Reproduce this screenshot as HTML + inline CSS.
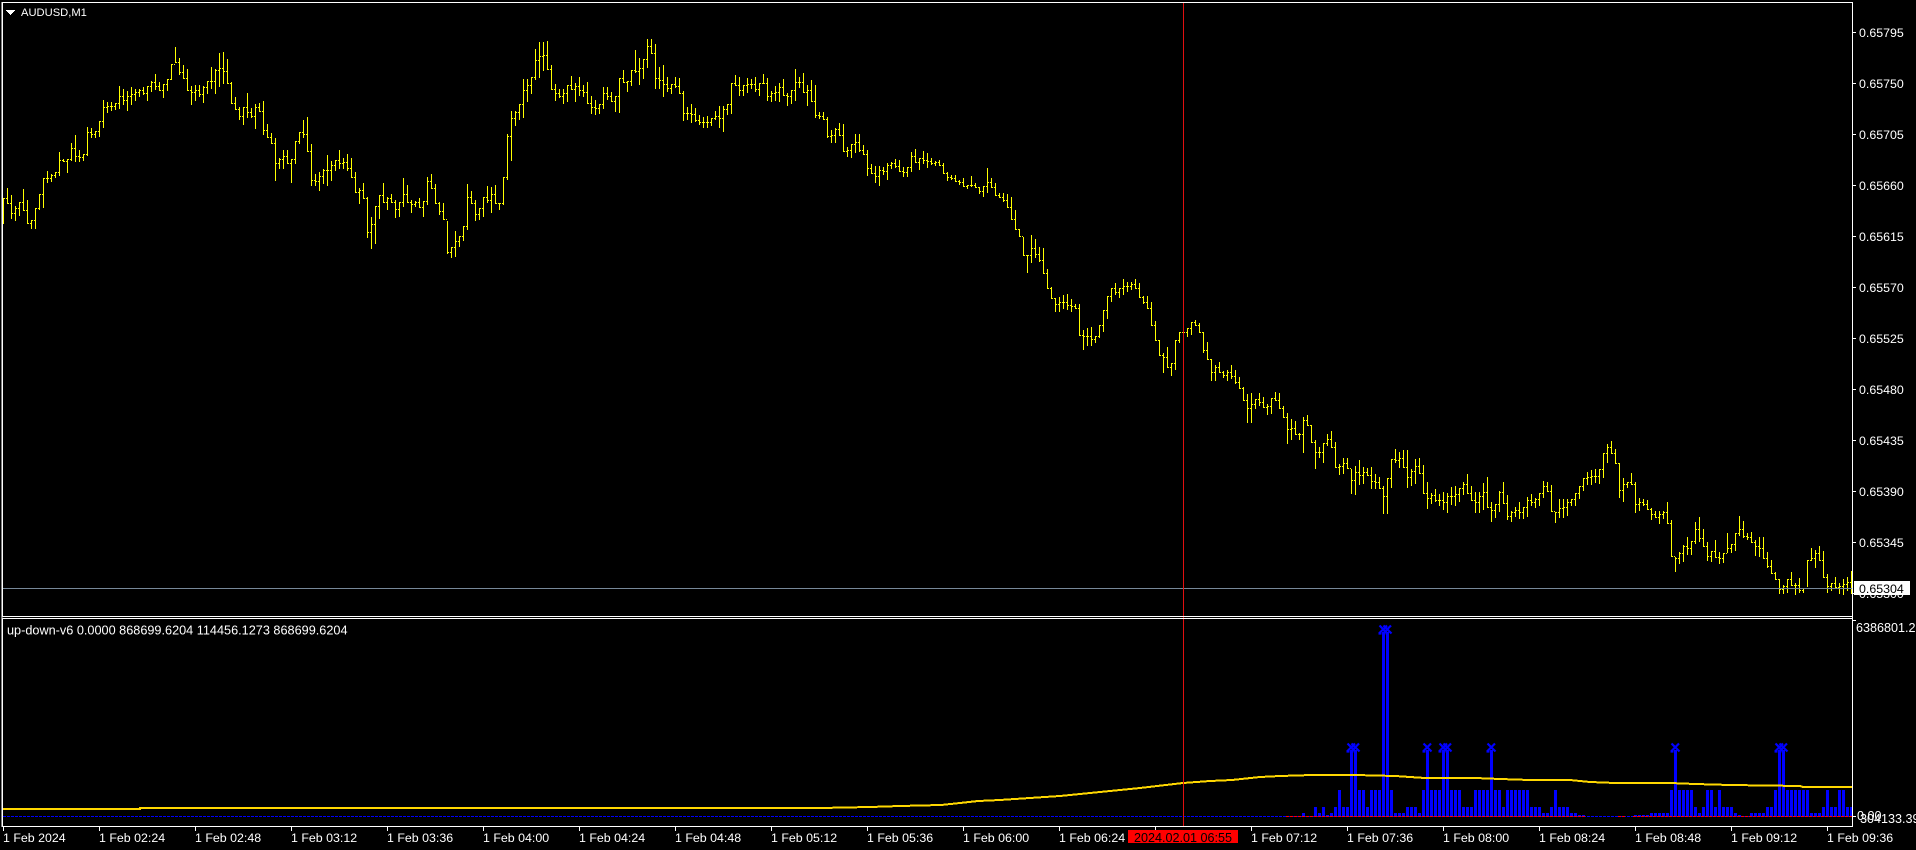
<!DOCTYPE html>
<html lang="en">
<head>
<meta charset="utf-8">
<title>AUDUSD,M1</title>
<style>
html,body{margin:0;padding:0;background:#000;width:1916px;height:850px;overflow:hidden}
svg{display:block;position:absolute;left:0;top:0}
text{font-family:"Liberation Sans",Arial,sans-serif;fill:#fff;font-size:12.4px}
.t{font-size:11.2px}
</style>
</head>
<body>
<svg width="1916" height="850" viewBox="0 0 1916 850" xmlns="http://www.w3.org/2000/svg">
<defs><path id="xm" d="M-3.5-4L4.5 4M4-4L-4 4M-4.5 4h3"/></defs>
<rect width="1916" height="850" fill="#000"/>
<g shape-rendering="crispEdges">
<path fill="none" stroke="#0000ff" stroke-width="3" transform="translate(.5 0)" d="M1303 813V817M1315 807V817M1319 813V817M1323 807V817M1327 815V817M1331 813V817M1335 807V817M1339 790V817M1343 807V817M1347 807V817M1351 750V817M1355 750V817M1359 790V817M1363 790V817M1367 807V817M1371 790V817M1375 790V817M1379 790V817M1383 632V817M1387 632V817M1391 790V817M1395 813V817M1399 813V817M1403 813V817M1407 807V817M1411 807V817M1415 807V817M1419 813V817M1423 790V817M1427 750V817M1431 790V817M1435 790V817M1439 790V817M1443 750V817M1447 750V817M1451 790V817M1455 790V817M1459 790V817M1463 807V817M1467 807V817M1471 807V817M1475 790V817M1479 790V817M1483 790V817M1487 790V817M1491 750V817M1495 790V817M1499 790V817M1503 807V817M1507 790V817M1511 790V817M1515 790V817M1519 790V817M1523 790V817M1527 790V817M1531 807V817M1535 807V817M1539 807V817M1543 813V817M1547 813V817M1551 807V817M1555 790V817M1559 807V817M1563 807V817M1567 807V817M1571 813V817M1575 813V817M1579 815V817M1583 815V817M1635 815V817M1639 815V817M1643 815V817M1647 815V817M1651 813V817M1655 813V817M1659 813V817M1663 813V817M1667 813V817M1671 790V817M1675 750V817M1679 790V817M1683 790V817M1687 790V817M1691 790V817M1695 807V817M1699 813V817M1703 807V817M1707 790V817M1711 790V817M1715 807V817M1719 790V817M1723 807V817M1727 807V817M1731 807V817M1735 813V817M1739 815V817M1751 813V817M1755 813V817M1759 813V817M1763 813V817M1767 807V817M1771 807V817M1775 790V817M1779 750V817M1783 750V817M1787 790V817M1791 790V817M1795 790V817M1799 790V817M1803 790V817M1807 790V817M1811 813V817M1815 813V817M1819 813V817M1823 807V817M1827 790V817M1831 807V817M1835 807V817M1839 790V817M1843 790V817M1847 807V817M1851 807V817"/>
<path d="M3 816.5H1852" stroke="#0000ff" stroke-width="1" stroke-dasharray="3 1" fill="none"/>
<path d="M1286 816.5H1585M1618 816.5H1625M1633 816.5H1852" stroke="#ff0000" stroke-width="1" stroke-dasharray="3 1" fill="none"/>
<polyline fill="none" stroke="#ffd700" stroke-width="2" points="3,809 140,809 140,808 820,808 870,807 900,806 941,805 960,803 978,801 1000,800 1030,798 1060,796 1100,792 1140,788 1183,783 1210,781 1232,780 1260,777 1280,776 1312,775 1355,775 1395,776 1425,778 1475,778 1500,779 1530,780 1570,780 1590,782 1615,783 1670,783 1695,784 1730,785 1800,786 1803,787 1852,787"/>
<path fill="none" stroke="#ffff00" stroke-width="1" transform="translate(.5 0)" d="M3 198V224M7 188V204M11 195V219M15 206V221M19 202V216M23 189V211M27 200V224M31 220V229M35 208V229M39 194V210
M43 178V208M47 171V183M51 174V182M55 172V178M59 152V176M63 159V162M67 159V173M71 143V161M75 135V162M79 150V162
M83 154V161M87 127V156M91 128V138M95 131V138M99 121V137M103 100V128M107 102V113M111 102V111M115 103V110M119 86V109
M123 89V105M127 91V111M131 87V105M135 89V101M139 89V97M143 87V95M147 86V101M151 81V92M155 74V90M159 82V91
M163 84V98M167 79V91M171 64V80M175 47V63M179 58V75M183 65V79M187 69V91M191 86V105M195 85V101M199 85V97
M203 86V103M207 81V94M211 67V89M215 69V94M219 53V87M223 52V84M227 59V84M231 82V104M235 97V110M239 107V120
M243 107V125M247 93V118M251 108V118M255 104V129M259 103V112M263 101V135M267 124V138M271 133V144M275 138V181M279 158V169
M283 150V169M287 150V164M291 159V183M295 141V164M299 132V144M303 120V138M307 117V152M311 144V186M315 174V186M319 172V191
M323 169V184M327 155V186M331 161V181M335 160V171M339 150V169M343 158V169M347 154V171M351 158V178M355 172V193M359 188V204
M363 183V199M367 197V238M371 217V249M375 206V244M379 195V219M383 183V203M387 197V210M391 194V203M395 200V218M399 202V217
M403 178V207M407 185V203M411 200V213M415 201V207M419 198V208M423 201V217M427 177V205M431 174V189M435 184V204M439 202V215
M443 203V220M447 221V254M451 247V258M455 231V257M459 236V247M463 226V241M467 184V230M471 191V204M475 200V221M479 208V220
M483 197V217M487 186V203M491 187V213M495 185V204M499 203V210M503 177V205M507 134V180M511 111V161M515 111V126M519 104V120
M523 79V118M527 79V102M531 77V94M535 49V80M539 42V78M543 42V71M547 41V70M551 65V90M555 84V101M559 89V98
M563 89V104M567 85V102M571 76V90M575 83V102M579 77V96M583 85V97M587 82V104M591 96V114M595 100V115M599 104V114
M603 87V109M607 87V100M611 92V102M615 96V112M619 78V113M623 70V83M627 81V92M631 70V86M635 50V73M639 58V85
M643 59V79M647 39V68M651 39V54M655 44V89M659 67V89M663 65V97M667 77V92M671 84V94M675 77V88M679 78V94
M683 91V121M687 107V120M691 104V123M695 108V122M699 115V125M703 117V128M707 116V128M711 118V126M715 111V120M719 106V128
M723 106V132M727 104V115M731 83V114M735 75V86M739 77V96M743 85V96M747 78V93M751 79V89M755 77V92M759 83V96
M763 74V84M767 78V101M771 91V102M775 86V101M779 83V102M783 79V96M787 93V106M791 90V104M795 69V101M799 77V88
M803 73V93M807 85V106M811 80V102M815 85V118M819 112V119M823 112V120M827 117V138M831 130V143M835 128V143M839 123V136
M843 124V152M847 147V157M851 144V158M855 134V153M859 134V152M863 145V155M867 150V176M871 164V174M875 166V183M879 166V186
M883 167V175M887 163V180M891 162V169M895 159V168M899 160V172M903 167V177M907 167V177M911 152V172M915 149V163M919 158V170
M923 151V164M927 153V168M931 158V165M935 161V166M939 160V166M943 163V174M947 172V181M951 175V180M955 175V182M959 180V185
M963 178V187M967 185V189M971 176V187M975 183V188M979 187V194M983 186V197M987 168V193M991 178V188M995 183V196M999 193V198
M1003 193V202M1007 194V208M1011 197V220M1015 210V230M1019 229V237M1023 237V256M1027 255V273M1031 235V263M1035 239V258M1039 247V262
M1043 248V274M1047 269V289M1051 287V299M1055 298V312M1059 297V312M1063 295V309M1067 294V310M1071 299V312M1075 304V309M1079 304V336
M1083 330V350M1087 328V346M1091 327V346M1095 336V343M1099 325V338M1103 310V332M1107 296V319M1111 288V302M1115 283V295M1119 288V298
M1123 279V295M1127 282V292M1131 282V290M1135 279V289M1139 283V298M1143 296V304M1147 296V309M1151 302V326M1155 321V341M1159 340V356
M1163 353V373M1167 347V368M1171 363V376M1175 340V370M1179 332V343M1183 324V338M1187 328V337M1191 322V335M1195 320V326M1199 323V333
M1203 332V353M1207 342V360M1211 359V381M1215 365V381M1219 362V373M1223 371V378M1227 370V381M1231 365V379M1235 370V384M1239 377V389
M1243 387V401M1247 394V423M1251 393V423M1255 399V409M1259 393V406M1263 397V408M1267 404V415M1271 398V414M1275 392V401M1279 393V409
M1283 406V418M1287 413V444M1291 419V440M1295 421V435M1299 433V440M1303 417V453M1307 415V426M1311 425V443M1315 440V469M1319 447V458
M1323 443V463M1327 434V446M1331 431V448M1335 442V468M1339 464V475M1343 458V474M1347 458V469M1351 469V494M1355 466V495M1359 460V485
M1363 467V484M1367 468V476M1371 467V489M1375 474V489M1379 477V489M1383 486V514M1387 478V514M1391 459V488M1395 449V463M1399 452V468
M1403 450V468M1407 450V488M1411 469V486M1415 459V484M1419 458V474M1423 465V494M1427 482V509M1431 493V504M1435 489V502M1439 494V506
M1443 492V510M1447 493V513M1451 487V505M1455 486V506M1459 488V502M1463 482V495M1467 474V494M1471 486V501M1475 492V513M1479 492V513
M1483 483V510M1487 477V508M1491 502V522M1495 504V518M1499 491V512M1503 482V504M1507 495V520M1511 511V522M1515 507V517M1519 502V519
M1523 507V519M1527 497V517M1531 494V506M1535 498V508M1539 493V506M1543 481V498M1547 482V492M1551 485V512M1555 512V523M1559 499V518
M1563 499V518M1567 499V516M1571 499V506M1575 493V506M1579 486V499M1583 478V491M1587 472V485M1591 470V485M1595 469V483M1599 469V484
M1603 453V478M1607 444V463M1611 441V454M1615 449V464M1619 463V498M1623 478V502M1627 482V488M1631 473V485M1635 482V513M1639 498V511
M1643 499V506M1647 500V510M1651 508V520M1655 511V518M1659 511V524M1663 511V519M1667 502V524M1671 520V557M1675 557V572M1679 552V564
M1683 545V562M1687 537V555M1691 541V555M1695 522V544M1699 517V542M1703 529V547M1707 542V561M1711 551V562M1715 540V558M1719 552V564
M1723 553V563M1727 533V553M1731 544V553M1735 533V551M1739 516V536M1743 521V538M1747 533V540M1751 532V543M1755 540V556M1759 537V557
M1763 537V559M1767 552V568M1771 560V574M1775 572V580M1779 579V594M1783 585V594M1787 579V593M1791 572V586M1795 583V595M1799 578V593
M1803 588V593M1807 560V587M1811 548V561M1815 550V568M1819 546V561M1823 551V578M1827 574V593M1831 583V591M1835 577V588M1839 583V594
M1843 579V595M1847 577V591M1851 571V594"/>
<path fill="none" stroke="#ffff00" stroke-width="1" stroke-dasharray="1 1" transform="translate(0 .5)" d="M4 198h3M8 203h3M12 213h3M16 208h3M20 202h3M24 210h3M28 223h3M32 220h3M36 208h3M40 194h3
M44 178h3M48 178h3M52 175h3M56 172h3M60 160h3M64 161h3M68 159h3M72 148h3M76 156h3M80 157h3
M84 154h3M88 132h3M92 134h3M96 131h3M100 121h3M104 107h3M108 106h3M112 106h3M116 103h3M120 96h3
M124 100h3M128 96h3M132 94h3M136 92h3M140 90h3M144 93h3M148 86h3M152 82h3M156 86h3M160 90h3
M164 84h3M168 79h3M172 64h3M176 62h3M180 72h3M184 78h3M188 90h3M192 92h3M196 90h3M200 94h3
M204 87h3M208 81h3M212 81h3M216 70h3M220 68h3M224 71h3M228 83h3M232 103h3M236 109h3M240 116h3
M244 107h3M248 112h3M252 116h3M256 107h3M260 111h3M264 130h3M268 137h3M272 143h3M276 163h3M280 159h3
M284 156h3M288 163h3M292 159h3M296 141h3M300 132h3M304 134h3M308 151h3M312 180h3M316 181h3M320 176h3
M324 170h3M328 170h3M332 165h3M336 160h3M340 163h3M344 162h3M348 168h3M352 177h3M356 192h3M360 190h3
M364 198h3M368 232h3M372 224h3M376 206h3M380 195h3M384 202h3M388 198h3M392 202h3M396 209h3M400 202h3
M404 194h3M408 202h3M412 204h3M416 202h3M420 207h3M424 201h3M428 181h3M432 188h3M436 203h3M440 211h3
M444 219h3M448 252h3M452 247h3M456 241h3M460 236h3M464 226h3M468 197h3M472 203h3M476 214h3M480 208h3
M484 197h3M488 200h3M492 194h3M496 203h3M500 203h3M504 177h3M508 136h3M512 118h3M516 112h3M520 104h3
M524 90h3M528 85h3M532 77h3M536 60h3M540 56h3M544 55h3M548 69h3M552 89h3M556 93h3M560 96h3
M564 93h3M568 85h3M572 89h3M576 86h3M580 90h3M584 92h3M588 103h3M592 107h3M596 108h3M600 104h3
M604 93h3M608 96h3M612 101h3M616 96h3M620 78h3M624 82h3M628 81h3M632 70h3M636 71h3M640 68h3
M644 59h3M648 46h3M652 53h3M656 78h3M660 80h3M664 84h3M668 88h3M672 84h3M676 86h3M680 93h3
M684 113h3M688 113h3M692 114h3M696 120h3M700 122h3M704 122h3M708 122h3M712 118h3M716 116h3M720 118h3
M724 109h3M728 104h3M732 83h3M736 85h3M740 90h3M744 85h3M748 84h3M752 84h3M756 89h3M760 83h3
M764 83h3M768 96h3M772 93h3M776 92h3M780 87h3M784 95h3M788 96h3M792 90h3M796 82h3M800 82h3
M804 92h3M808 90h3M812 101h3M816 115h3M820 116h3M824 119h3M828 136h3M832 135h3M836 129h3M840 135h3
M844 151h3M848 150h3M852 144h3M856 142h3M860 150h3M864 154h3M868 168h3M872 173h3M876 176h3M880 170h3
M884 171h3M888 165h3M892 163h3M896 166h3M900 171h3M904 172h3M908 167h3M912 156h3M916 162h3M920 158h3
M924 160h3M928 161h3M932 163h3M936 162h3M940 165h3M944 173h3M948 177h3M952 178h3M956 181h3M960 182h3
M964 186h3M968 185h3M972 185h3M976 187h3M980 191h3M984 186h3M988 182h3M992 187h3M996 195h3M1000 197h3
M1004 200h3M1008 207h3M1012 219h3M1016 229h3M1020 236h3M1024 255h3M1028 255h3M1032 248h3M1036 254h3M1040 260h3
M1044 273h3M1048 288h3M1052 298h3M1056 304h3M1060 302h3M1064 302h3M1068 305h3M1072 306h3M1076 308h3M1080 335h3
M1084 336h3M1088 336h3M1092 339h3M1096 336h3M1100 325h3M1104 310h3M1108 296h3M1112 288h3M1116 292h3M1120 288h3
M1124 286h3M1128 286h3M1132 284h3M1136 288h3M1140 297h3M1144 302h3M1148 308h3M1152 325h3M1156 340h3M1160 355h3
M1164 357h3M1168 367h3M1172 363h3M1176 340h3M1180 332h3M1184 332h3M1188 328h3M1192 322h3M1196 325h3M1200 332h3
M1204 350h3M1208 359h3M1212 372h3M1216 367h3M1220 372h3M1224 375h3M1228 372h3M1232 376h3M1236 382h3M1240 388h3
M1244 400h3M1248 408h3M1252 404h3M1256 399h3M1260 402h3M1264 407h3M1268 406h3M1272 398h3M1276 400h3M1280 408h3
M1284 417h3M1288 429h3M1292 428h3M1296 434h3M1300 434h3M1304 420h3M1308 425h3M1312 442h3M1316 452h3M1320 452h3
M1324 443h3M1328 439h3M1332 447h3M1336 467h3M1340 466h3M1344 463h3M1348 468h3M1352 480h3M1356 472h3M1360 475h3
M1364 472h3M1368 475h3M1372 481h3M1376 482h3M1380 488h3M1384 496h3M1388 478h3M1392 459h3M1396 460h3M1400 458h3
M1404 467h3M1408 477h3M1412 471h3M1416 466h3M1420 473h3M1424 493h3M1428 498h3M1432 495h3M1436 500h3M1440 500h3
M1444 502h3M1448 496h3M1452 496h3M1456 494h3M1460 488h3M1464 484h3M1468 493h3M1472 500h3M1476 502h3M1480 496h3
M1484 492h3M1488 507h3M1492 510h3M1496 504h3M1500 492h3M1504 503h3M1508 516h3M1512 512h3M1516 510h3M1520 512h3
M1524 507h3M1528 500h3M1532 502h3M1536 499h3M1540 493h3M1544 486h3M1548 491h3M1552 511h3M1556 512h3M1560 508h3
M1564 507h3M1568 502h3M1572 499h3M1576 493h3M1580 486h3M1584 478h3M1588 477h3M1592 476h3M1596 476h3M1600 469h3
M1604 453h3M1608 447h3M1612 453h3M1616 463h3M1620 490h3M1624 484h3M1628 482h3M1632 484h3M1636 504h3M1640 502h3
M1644 504h3M1648 509h3M1652 514h3M1656 517h3M1660 514h3M1664 512h3M1668 523h3M1672 556h3M1676 558h3M1680 553h3
M1684 546h3M1688 548h3M1692 541h3M1696 529h3M1700 538h3M1704 546h3M1708 556h3M1712 551h3M1716 557h3M1720 558h3
M1724 553h3M1728 548h3M1732 544h3M1736 533h3M1740 529h3M1744 536h3M1748 537h3M1752 542h3M1756 546h3M1760 548h3
M1764 558h3M1768 566h3M1772 573h3M1776 579h3M1780 589h3M1784 586h3M1788 579h3M1792 585h3M1796 585h3M1800 590h3
M1804 588h3M1808 560h3M1812 558h3M1816 553h3M1820 560h3M1824 577h3M1828 586h3M1832 583h3M1836 587h3M1840 586h3
M1844 584h3M1848 582h3"/>
<path d="M3 588.5H1852" stroke="#778899" stroke-width="1"/>
<path d="M1183.5 3V826" stroke="#e01010" stroke-width="1"/>
<path fill="none" stroke="#fff" stroke-width="1" d="M2 2.5H1852.5V826.5H2ZM2.5 2V617M2 616.5H1852M2.5 618V827M2 618.5H1852M1853 32.5h3M1853 83.5h3M1853 134.5h3M1853 185.5h3M1853 236.5h3M1853 287.5h3M1853 338.5h3M1853 389.5h3M1853 440.5h3M1853 491.5h3M1853 542.5h3M1853 593.5h3M1853 620.5h3M1853 816.5h3"/>
<path d="M6 10H15V11H14V12H13V13H12V14H11V15H10V14H9V13H8V12H7V11H6Z" fill="#fff"/>
<path fill="none" stroke="#fff" stroke-width="1" d="M3.5 827v4M99.5 827v4M195.5 827v4M291.5 827v4M387.5 827v4M483.5 827v4M579.5 827v4M675.5 827v4M771.5 827v4M867.5 827v4M963.5 827v4M1059.5 827v4M1155.5 827v4M1251.5 827v4M1347.5 827v4M1443.5 827v4M1539.5 827v4M1635.5 827v4M1731.5 827v4M1827.5 827v4"/>
</g>
<g fill="none" stroke="#0000ff" stroke-width="2.2">
<use href="#xm" x="1351" y="747.5"/><use href="#xm" x="1355" y="747.5"/>
<use href="#xm" x="1383" y="629.5"/><use href="#xm" x="1387" y="629.5"/>
<use href="#xm" x="1427" y="747.5"/><use href="#xm" x="1443" y="747.5"/><use href="#xm" x="1447" y="747.5"/>
<use href="#xm" x="1491" y="747.5"/><use href="#xm" x="1675" y="747.5"/>
<use href="#xm" x="1779" y="747.5"/><use href="#xm" x="1783" y="747.5"/>
</g>
<text class="t" x="21" y="16">AUDUSD,M1</text>
<text x="7" y="634.5" style="font-size:12.7px">up-down-v6 0.0000 868699.6204 114456.1273 868699.6204</text>
<g>
<text x="1859" y="37">0.65795</text>
<text x="1859" y="88">0.65750</text>
<text x="1859" y="139">0.65705</text>
<text x="1859" y="190">0.65660</text>
<text x="1859" y="241">0.65615</text>
<text x="1859" y="292">0.65570</text>
<text x="1859" y="343">0.65525</text>
<text x="1859" y="394">0.65480</text>
<text x="1859" y="445">0.65435</text>
<text x="1859" y="496">0.65390</text>
<text x="1859" y="547">0.65345</text>
<text x="1859" y="598">0.65300</text>
<text x="1856" y="632" style="font-size:12.6px">6386801.2</text>
<text x="1860" y="823" style="font-size:12.6px">304133.39</text>
<text x="1857" y="820" style="font-size:12.6px">0.00</text>
</g>
<rect x="1854" y="581" width="56" height="14" fill="#fff"/>
<text x="1859" y="593" style="fill:#000">0.65304</text>
<g>
<text x="3" y="842">1 Feb 2024</text>
<text x="99" y="842">1 Feb 02:24</text>
<text x="195" y="842">1 Feb 02:48</text>
<text x="291" y="842">1 Feb 03:12</text>
<text x="387" y="842">1 Feb 03:36</text>
<text x="483" y="842">1 Feb 04:00</text>
<text x="579" y="842">1 Feb 04:24</text>
<text x="675" y="842">1 Feb 04:48</text>
<text x="771" y="842">1 Feb 05:12</text>
<text x="867" y="842">1 Feb 05:36</text>
<text x="963" y="842">1 Feb 06:00</text>
<text x="1059" y="842">1 Feb 06:24</text>
<text x="1251" y="842">1 Feb 07:12</text>
<text x="1347" y="842">1 Feb 07:36</text>
<text x="1443" y="842">1 Feb 08:00</text>
<text x="1539" y="842">1 Feb 08:24</text>
<text x="1635" y="842">1 Feb 08:48</text>
<text x="1731" y="842">1 Feb 09:12</text>
<text x="1827" y="842">1 Feb 09:36</text>
</g>
<rect x="1128" y="830" width="110" height="13" fill="#ff0000" shape-rendering="crispEdges"/>
<text x="1134" y="842" style="fill:#000;font-size:12.6px">2024.02.01 06:55</text>
</svg>
</body>
</html>
